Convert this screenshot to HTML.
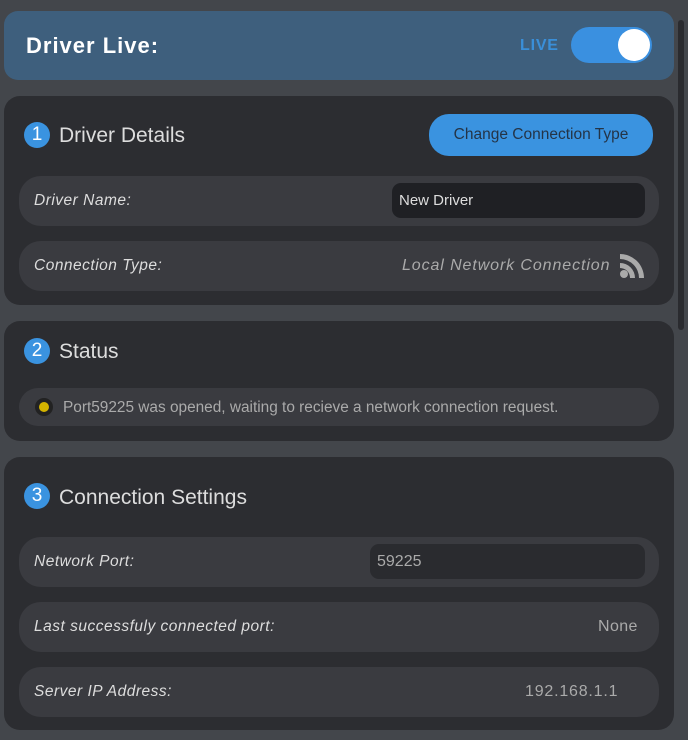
<!DOCTYPE html>
<html><head><style>
*{box-sizing:border-box;margin:0;padding:0}
body{width:688px;height:740px;background:#43464b;font-family:"Liberation Sans",sans-serif;position:relative;overflow:hidden;color:#ddd}
.abs{position:absolute}
.hdr{left:4px;top:11px;width:670px;height:69px;background:#3e5f7d;border-radius:14px}
.card{left:4px;width:670px;background:#2c2d31;border-radius:16px}
.row{position:absolute;left:15px;width:640px;height:50px;background:#3a3b40;border-radius:22px}
.lbl{position:absolute;left:15px;top:16px;font-style:italic;font-size:15.5px;color:#ddd;letter-spacing:.5px}
.num{position:absolute;left:20px;width:26px;height:26px;border-radius:50%;background:#3a93e0;color:#fff;font-size:19px;text-align:center;line-height:26px}
.title{position:absolute;left:55px;font-size:21px;color:#ddd}
.inp{position:absolute;height:35px;top:7px;background:#1f2024;border-radius:9px;font-size:15px;color:#ccc;padding-left:7px;line-height:35px}
.val{position:absolute;top:16px;font-size:16px;color:#aaa;letter-spacing:.4px}
</style></head><body>
<div class="abs" style="left:678px;top:20px;width:6px;height:310px;background:#2a2b2f;border-radius:3px"></div>
<div class="abs hdr">
 <div class="abs" style="left:22px;top:22px;font-size:22px;font-weight:bold;color:#fff;letter-spacing:1px">Driver Live:</div>
 <div class="abs" style="left:516px;top:26px;font-size:16px;font-weight:bold;color:#3a8fd9;letter-spacing:.8px">LIVE</div>
 <div class="abs" style="left:567px;top:16px;width:81px;height:36px;border-radius:18px;background:#3a90e0"><div class="abs" style="left:47px;top:2px;width:32px;height:32px;border-radius:50%;background:#fff"></div></div>
</div>

<div class="abs card" style="top:96px;height:209px">
 <div class="num" style="top:26px">1</div>
 <div class="title" style="top:28px">Driver Details</div>
 <div class="abs" style="left:425px;top:18px;width:224px;height:42px;border-radius:20px;background:#3a93e0;color:#243447;font-size:15.5px;text-align:center;line-height:42px">Change Connection Type</div>
 <div class="row" style="top:80px"><div class="lbl">Driver Name:</div><div class="inp" style="left:373px;width:253px;color:#ddd">New Driver</div></div>
 <div class="row" style="top:145px"><div class="lbl">Connection Type:</div><div class="val" style="left:383px;font-style:italic;letter-spacing:.9px">Local Network Connection</div>
  <svg class="abs" style="left:600px;top:12px" width="26" height="26" viewBox="0 0 26 26"><circle cx="5" cy="21" r="4" fill="#aaa"/><path d="M1 10a15 15 0 0 1 15 15h-5A10 10 0 0 0 1 15z" fill="#aaa"/><path d="M1 1a24 24 0 0 1 24 24h-5A19 19 0 0 0 1 6z" fill="#aaa"/></svg>
 </div>
</div>

<div class="abs card" style="top:321px;height:120px">
 <div class="num" style="top:17px">2</div>
 <div class="title" style="top:19px">Status</div>
 <div class="row" style="top:67px;height:38px"><div class="abs" style="left:16px;top:10px;width:18px;height:18px;border-radius:50%;background:#222"></div><div class="abs" style="left:20px;top:14px;width:10px;height:10px;border-radius:50%;background:#d4b400"></div>
 <div class="abs" style="left:44px;top:11px;font-size:15.4px;color:#aaa">Port59225 was opened, waiting to recieve a network connection request.</div></div>
</div>

<div class="abs card" style="top:457px;height:273px">
 <div class="num" style="top:26px">3</div>
 <div class="title" style="top:29px">Connection Settings</div>
 <div class="row" style="top:80px"><div class="lbl">Network Port:</div><div class="inp" style="left:351px;width:275px;background:#2a2b2f;color:#aaa;font-size:16px">59225</div></div>
 <div class="row" style="top:145px"><div class="lbl">Last successfuly connected port:</div><div class="val" style="left:579px">None</div></div>
 <div class="row" style="top:210px"><div class="lbl">Server IP Address:</div><div class="val" style="left:506px;letter-spacing:.8px">192.168.1.1</div></div>
</div>
</body></html>
